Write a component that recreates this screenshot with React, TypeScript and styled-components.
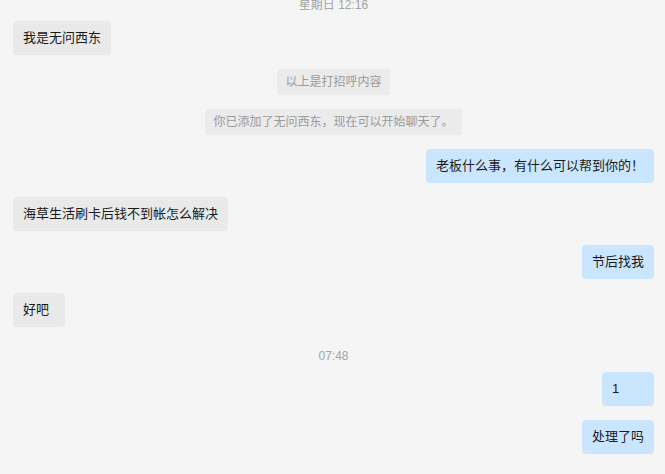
import React from "react";
import styled, { createGlobalStyle } from "styled-components";

const Global = createGlobalStyle`
  html, body {
    margin: 0;
    padding: 0;
    background: #f5f5f5;
  }
  body {
    font-family: "Liberation Sans", "Noto Sans CJK SC", sans-serif;
  }
`;

const Page = styled.div`
  width: 665px;
  height: 474px;
  overflow: hidden;
  background: #f5f5f5;
`;

const List = styled.div`
  display: flex;
  flex-direction: column;
  gap: 14px;
  padding: 0 11px 0 13px;
  margin-top: -10px;
`;

const Time = styled.div`
  align-self: center;
  font-size: 12px;
  line-height: 16px;
  height: 16px;
  color: #a3a3a3;
  margin: 7px 0 -6px;
`;

const Notice = styled.div`
  align-self: center;
  font-size: 12px;
  line-height: 16px;
  padding: 5px 8px;
  border-radius: 3px;
  background: #ebebeb;
  color: #9a9a9a;
`;

const Row = styled.div<{ $mine?: boolean }>`
  display: flex;
  justify-content: ${(p) => (p.$mine ? "flex-end" : "flex-start")};
`;

const Bubble = styled.div<{ $mine?: boolean }>`
  box-sizing: border-box;
  min-width: 52px;
  height: 34px;
  padding: 8px 10px;
  font-size: 13px;
  line-height: 18px;
  color: #1a1a1a;
  border-radius: 4px;
  background: ${(p) => (p.$mine ? "#cae6fe" : "#e9e9e9")};
`;

type Item =
  | { kind: "time"; text: string }
  | { kind: "notice"; text: string }
  | { kind: "msg"; text: string; mine?: boolean };

const items: Item[] = [
  { kind: "time", text: "星期日 12:16" },
  { kind: "msg", text: "我是无问西东" },
  { kind: "notice", text: "以上是打招呼内容" },
  { kind: "notice", text: "你已添加了无问西东，现在可以开始聊天了。" },
  { kind: "msg", text: "老板什么事，有什么可以帮到你的！", mine: true },
  { kind: "msg", text: "海草生活刷卡后钱不到帐怎么解决" },
  { kind: "msg", text: "节后找我", mine: true },
  { kind: "msg", text: "好吧" },
  { kind: "time", text: "07:48" },
  { kind: "msg", text: "1", mine: true },
  { kind: "msg", text: "处理了吗", mine: true },
];

export default function App() {
  return (
    <Page>
      <Global />
      <List>
        {items.map((it, i) => {
          if (it.kind === "time") return <Time key={i}>{it.text}</Time>;
          if (it.kind === "notice") return <Notice key={i}>{it.text}</Notice>;
          return (
            <Row key={i} $mine={it.mine}>
              <Bubble $mine={it.mine}>{it.text}</Bubble>
            </Row>
          );
        })}
      </List>
    </Page>
  );
}
